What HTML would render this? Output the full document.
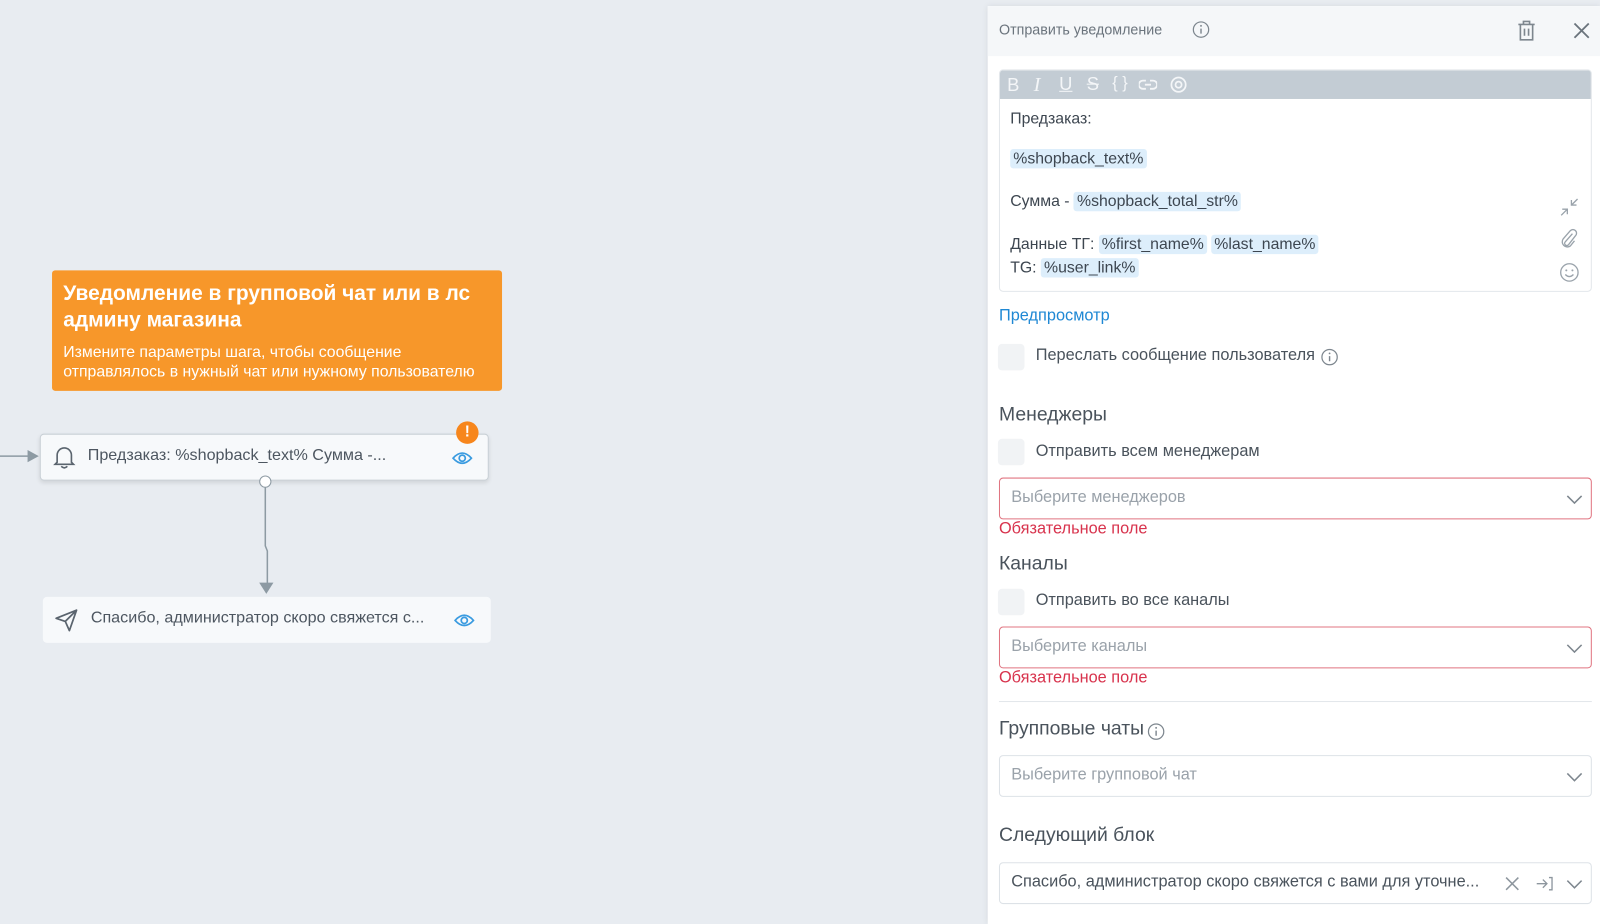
<!DOCTYPE html>
<html><head><meta charset="utf-8"><style>
*{box-sizing:border-box;margin:0;padding:0}
body{width:1600px;height:915px;overflow:hidden;background:#e8ecf1;font-family:"Liberation Sans",sans-serif;position:relative;color:#3d4650}
#root{position:absolute;left:0;top:0;width:1568px;height:897px;transform:scale(1.0204);transform-origin:0 0}
.abs{position:absolute}
.panel{position:absolute;left:968px;top:6px;width:600px;height:900px;background:#fff;box-shadow:0 0 6px rgba(0,0,0,.08)}
.hdr{position:absolute;left:0;top:0;width:600px;height:49px;background:#f5f7f9}
.t{position:absolute;white-space:nowrap}
.chip{background:#ddeefb;border-radius:3px;padding:1px 3px}
.cb{position:absolute;left:10px;width:26px;height:26px;border-radius:4px;background:#f1f3f5}
.sel{position:absolute;left:11px;width:581px;height:41px;border:1px solid #dde2e7;border-radius:4px}
.sel.err{border-color:#e07480}
.sel span{position:absolute;left:11px;top:10px;font-size:16px;color:#9aa2aa}
.chev{position:absolute;right:8px;top:12px}
.h{font-size:19px;color:#4a535c}
.e{font-size:16px;color:#d8334d}
.ed{font-size:15.5px}
</style></head><body><div id="root">
<div class="abs" style="left:51px;top:265px;width:441px;height:118px;background:#f7972a;border-radius:3px;color:#fff">
 <div class="t" style="left:11px;top:10px;font-size:20.5px;font-weight:bold;line-height:26px;white-space:normal;width:430px">Уведомление в групповой чат или в лс админу магазина</div>
 <div class="t" style="left:11px;top:71px;font-size:15.5px;line-height:19px;white-space:normal;width:430px">Измените параметры шага, чтобы сообщение отправлялось в нужный чат или нужному пользователю</div>
</div>
<svg class="abs" style="left:0;top:0" width="520" height="640">
 <line x1="0" y1="447" x2="34" y2="447" stroke="#8d9aa3" stroke-width="1.5"/>
 <path d="M27 441 L38 447 L27 453 Z" fill="#8d9aa3"/>
 <path d="M260 475 V535 L262 540 V576" stroke="#8d9aa3" stroke-width="1.5" fill="none"/>
 <path d="M254 571 L261 582 L268 571 Z" fill="#8d9aa3"/>
</svg>
<div class="abs" style="left:39px;top:425px;width:440px;height:46px;background:#f7f9fb;border:1px solid #c9d0d6;border-radius:4px;box-shadow:0 2px 4px rgba(0,0,0,.1)">
 <svg class="abs" style="left:12px;top:10px" width="22" height="24" viewBox="0 0 22 24"><path d="M4 17 V10 a7 7 0 0 1 14 0 V17 L20 19 H2 Z M8 21 q3 3 6 0" fill="none" stroke="#5a646e" stroke-width="1.6"/></svg>
 <div class="t" style="left:46px;top:12px;font-size:15.8px;color:#4d5660">Предзаказ: %shopback_text% Сумма -...</div>
 <svg class="abs" style="left:403px;top:16px" width="20" height="14" viewBox="0 0 20 14"><path d="M1 7 Q10 -3 19 7 Q10 17 1 7Z" fill="none" stroke="#3a9be0" stroke-width="1.7"/><circle cx="10" cy="7" r="3" fill="none" stroke="#3a9be0" stroke-width="1.7"/></svg>
</div>
<div class="abs" style="left:447px;top:413px;width:22px;height:22px;border-radius:50%;background:#f7861c;color:#fff;font-weight:bold;font-size:15px;text-align:center;line-height:22px">!</div>
<div class="abs" style="left:254px;top:466px;width:12px;height:12px;border-radius:50%;background:#fff;border:1px solid #8d9aa3"></div>
<div class="abs" style="left:42px;top:585px;width:439px;height:45px;background:#f7f9fb;border-radius:4px">
 <svg class="abs" style="left:11px;top:11px" width="24" height="24" viewBox="0 0 24 24"><path d="M2 10 L22 2 L15 22 L11 13 Z M11 13 L22 2" fill="none" stroke="#5a646e" stroke-width="1.7" stroke-linejoin="round"/></svg>
 <div class="t" style="left:47px;top:12px;font-size:15.8px;color:#4d5660">Спасибо, администратор скоро свяжется с...</div>
 <svg class="abs" style="left:403px;top:16px" width="20" height="14" viewBox="0 0 20 14"><path d="M1 7 Q10 -3 19 7 Q10 17 1 7Z" fill="none" stroke="#3a9be0" stroke-width="1.7"/><circle cx="10" cy="7" r="3" fill="none" stroke="#3a9be0" stroke-width="1.7"/></svg>
</div>

<div class="panel">
 <div class="hdr">
  <div class="t" style="left:11px;top:15px;font-size:14px;color:#6b747d">Отправить уведомление</div>
  <svg class="abs" style="left:200px;top:14px" width="18" height="18"><circle cx="9" cy="9" r="7.5" fill="none" stroke="#7d868e" stroke-width="1.2"/><line x1="9" y1="8" x2="9" y2="13" stroke="#7d868e" stroke-width="1.4"/><circle cx="9" cy="5.3" r="0.9" fill="#7d868e"/></svg>
  <svg class="abs" style="left:518px;top:13px" width="20" height="22" viewBox="0 0 20 22"><path d="M2 5 H18 M7 5 V2 H13 V5 M4 5 V20 H16 V5 M8 9 V16 M12 9 V16" fill="none" stroke="#7d868e" stroke-width="1.6"/></svg>
  <svg class="abs" style="left:573px;top:15px" width="18" height="18"><path d="M2 2 L16 16 M16 2 L2 16" stroke="#6b747d" stroke-width="1.8"/></svg>
 </div>
 <div class="abs" style="left:11px;top:62px;width:581px;height:218px;border:1px solid #e3e7eb;border-radius:4px;overflow:hidden">
  <div class="abs" style="left:0;top:0;width:581px;height:28px;background:#c3ccd4;color:#f4f6f8;font-size:18px">
   <span class="t" style="left:7px;top:4px">B</span>
   <span class="t" style="left:33px;top:3px;font-style:italic;font-family:'Liberation Serif',serif;font-size:20px">I</span>
   <span class="t" style="left:58px;top:3px;text-decoration:underline">U</span>
   <span class="t" style="left:85px;top:3px;text-decoration:line-through">S</span>
   <span class="t" style="left:110px;top:4px;font-size:16px">{ }</span>
   <svg class="abs" style="left:136px;top:8px" width="18" height="12"><path d="M7 2 H4 a4 4 0 0 0 0 8 H7 M11 2 H14 a4 4 0 0 1 0 8 H11 M6 6 H12" fill="none" stroke="#f4f6f8" stroke-width="1.8"/></svg>
   <svg class="abs" style="left:165px;top:6px" width="20" height="16"><circle cx="10" cy="8" r="7" fill="none" stroke="#f4f6f8" stroke-width="1.7"/><circle cx="10" cy="8" r="3" fill="none" stroke="#f4f6f8" stroke-width="1.7"/></svg>
  </div>
  <div class="t ed" style="left:10px;top:39px">Предзаказ:</div>
  <div class="t ed" style="left:10px;top:78px"><span class="chip">%shopback_text%</span></div>
  <div class="t ed" style="left:10px;top:120px">Сумма - <span class="chip">%shopback_total_str%</span></div>
  <div class="t ed" style="left:10px;top:162px">Данные ТГ: <span class="chip">%first_name%</span> <span class="chip">%last_name%</span></div>
  <div class="t ed" style="left:10px;top:185px">TG: <span class="chip">%user_link%</span></div>
  <svg class="abs" style="left:548px;top:124px" width="20" height="20"><path d="M2 18 L8 12 M3 12 H8 V17 M18 2 L12 8 M12 3 V8 H17" fill="none" stroke="#9aa3ab" stroke-width="1.3"/></svg>
  <svg class="abs" style="left:549px;top:155px" width="18" height="20"><path d="M12 5 L5 13 a2 2 0 0 0 3 3 L15 7 a3.5 3.5 0 0 0 -5 -5 L3 10 a5 5 0 0 0 7 7 L14 12" fill="none" stroke="#9aa3ab" stroke-width="1.3"/></svg>
  <svg class="abs" style="left:548px;top:188px" width="20" height="20"><circle cx="10" cy="10" r="8.5" fill="none" stroke="#9aa3ab" stroke-width="1.3"/><circle cx="7" cy="8" r="1" fill="#9aa3ab"/><circle cx="13" cy="8" r="1" fill="#9aa3ab"/><path d="M6 12 Q10 16 14 12" fill="none" stroke="#9aa3ab" stroke-width="1.3"/></svg>
 </div>
 <div class="t" style="left:11px;top:295px;font-size:16px;color:#1f88d4">Предпросмотр</div>
 <div class="cb" style="top:331px"></div>
 <div class="t" style="left:47px;top:334px;font-size:16px;color:#4a535c">Переслать сообщение пользователя</div>
 <svg class="abs" style="left:326px;top:335px" width="18" height="18"><circle cx="9" cy="9" r="7.5" fill="none" stroke="#7d868e" stroke-width="1.2"/><line x1="9" y1="8" x2="9" y2="13" stroke="#7d868e" stroke-width="1.4"/><circle cx="9" cy="5.3" r="0.9" fill="#7d868e"/></svg>
 <div class="t h" style="left:11px;top:390px">Менеджеры</div>
 <div class="cb" style="top:424px"></div>
 <div class="t" style="left:47px;top:428px;font-size:16px;color:#4a535c">Отправить всем менеджерам</div>
 <div class="sel err" style="top:462px"><span>Выберите менеджеров</span><svg class="chev" width="16" height="16"><path d="M1 5 L8 12 L15 5" fill="none" stroke="#7d868e" stroke-width="1.5"/></svg></div>
 <div class="t e" style="left:11px;top:504px">Обязательное поле</div>
 <div class="t h" style="left:11px;top:536px">Каналы</div>
 <div class="cb" style="top:571px"></div>
 <div class="t" style="left:47px;top:574px;font-size:16px;color:#4a535c">Отправить во все каналы</div>
 <div class="sel err" style="top:608px"><span>Выберите каналы</span><svg class="chev" width="16" height="16"><path d="M1 5 L8 12 L15 5" fill="none" stroke="#7d868e" stroke-width="1.5"/></svg></div>
 <div class="t e" style="left:11px;top:650px">Обязательное поле</div>
 <div class="abs" style="left:11px;top:681px;width:581px;height:1px;background:#e3e7eb"></div>
 <div class="t h" style="left:11px;top:698px">Групповые чаты</div>
 <svg class="abs" style="left:156px;top:702px" width="18" height="18"><circle cx="9" cy="9" r="7.5" fill="none" stroke="#7d868e" stroke-width="1.2"/><line x1="9" y1="8" x2="9" y2="13" stroke="#7d868e" stroke-width="1.4"/><circle cx="9" cy="5.3" r="0.9" fill="#7d868e"/></svg>
 <div class="sel" style="top:734px"><span>Выберите групповой чат</span><svg class="chev" width="16" height="16"><path d="M1 5 L8 12 L15 5" fill="none" stroke="#7d868e" stroke-width="1.5"/></svg></div>
 <div class="t h" style="left:11px;top:802px">Следующий блок</div>
 <div class="sel" style="top:839px"><span style="color:#4a535c">Спасибо, администратор скоро свяжется с вами для уточне...</span>
  <svg class="abs" style="left:494px;top:12px" width="16" height="16"><path d="M2 2 L14 14 M14 2 L2 14" stroke="#8d969e" stroke-width="1.5"/></svg>
  <svg class="abs" style="left:525px;top:12px" width="18" height="16"><path d="M1 8 H11 M7 4 L11 8 L7 12 M13 2 H16 V14 H13" fill="none" stroke="#8d969e" stroke-width="1.3"/></svg>
  <svg class="chev" width="16" height="16"><path d="M1 5 L8 12 L15 5" fill="none" stroke="#7d868e" stroke-width="1.5"/></svg></div>
</div>
</div></body></html>
